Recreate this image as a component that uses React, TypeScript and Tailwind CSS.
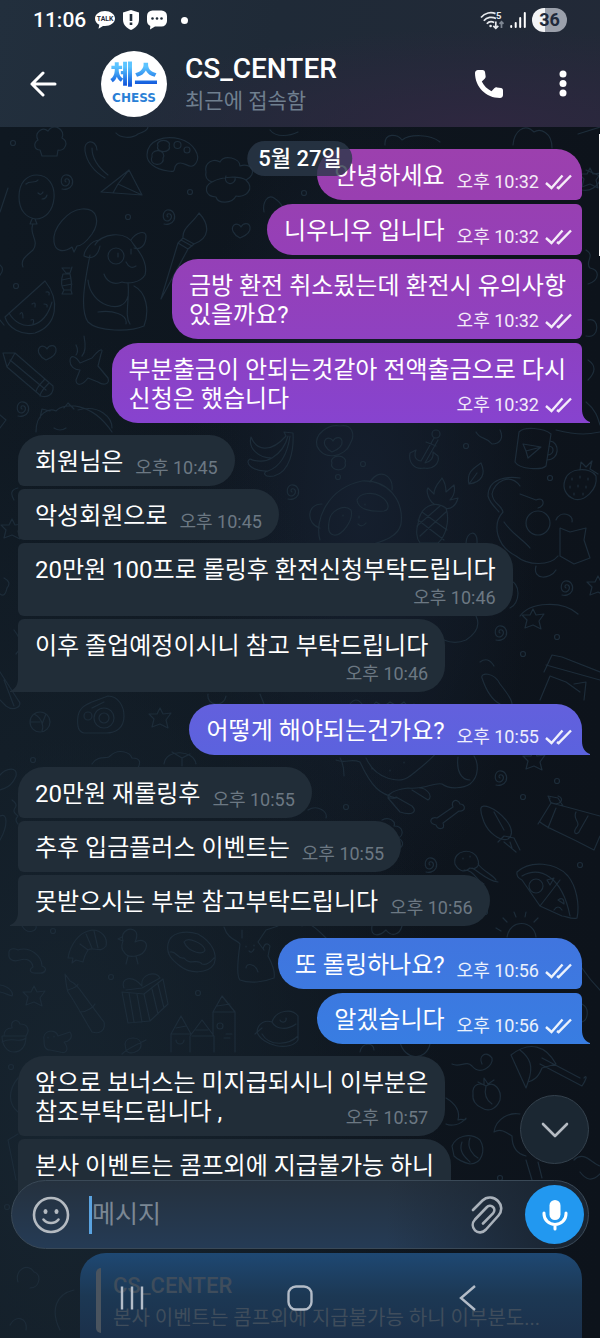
import type { ReactNode } from "react";

type Corner = "single" | "first" | "middle" | "last";

interface Message {
  lines: string[];
  time: string;
  stacked?: boolean;
  color?: string;
  tail?: string;
}

interface Group {
  own: boolean;
  messages: Message[];
}

const groups: Group[] = [
  {
    own: true,
    messages: [
      { lines: ["안녕하세요"], time: "오후 10:32", color: "from-[#9c40ae] to-[#993fb1]" },
      { lines: ["니우니우 입니다"], time: "오후 10:32", color: "from-[#9840b2] to-[#953fb8]" },
      {
        lines: ["금방 환전 취소됬는데 환전시 유의사항", "있을까요?"],
        time: "오후 10:32",
        color: "from-[#9540b7] to-[#8f41c1]",
      },
      {
        lines: ["부분출금이 안되는것같아 전액출금으로 다시", "신청은 했습니다"],
        time: "오후 10:32",
        color: "from-[#8d41c2] to-[#8743cf]",
        tail: "text-[#8743cf]",
      },
    ],
  },
  {
    own: false,
    messages: [
      { lines: ["회원님은"], time: "오후 10:45" },
      { lines: ["악성회원으로"], time: "오후 10:45" },
      { lines: ["20만원 100프로 롤링후 환전신청부탁드립니다"], time: "오후 10:46", stacked: true },
      { lines: ["이후 졸업예정이시니 참고 부탁드립니다"], time: "오후 10:46", stacked: true },
    ],
  },
  {
    own: true,
    messages: [
      {
        lines: ["어떻게 해야되는건가요?"],
        time: "오후 10:55",
        color: "from-[#6360dd] to-[#5b62de]",
        tail: "text-[#5b62de]",
      },
    ],
  },
  {
    own: false,
    messages: [
      { lines: ["20만원 재롤링후"], time: "오후 10:55" },
      { lines: ["추후 입금플러스 이벤트는"], time: "오후 10:55" },
      { lines: ["못받으시는 부분 참고부탁드립니다"], time: "오후 10:56" },
    ],
  },
  {
    own: true,
    messages: [
      { lines: ["또 롤링하나요?"], time: "오후 10:56", color: "from-[#4075df] to-[#3d79e0]" },
      {
        lines: ["알겠습니다"],
        time: "오후 10:56",
        color: "from-[#3c79e0] to-[#387de2]",
        tail: "text-[#387de2]",
      },
    ],
  },
];

const ownCorners: Record<Corner, string> = {
  single: "rounded-[26px] rounded-br-none",
  first: "rounded-[26px] rounded-br-md",
  middle: "rounded-l-[26px] rounded-r-md",
  last: "rounded-l-[26px] rounded-tr-md",
};

const peerCorners: Record<Corner, string> = {
  single: "rounded-[26px] rounded-bl-none",
  first: "rounded-[26px] rounded-bl-md",
  middle: "rounded-r-[26px] rounded-l-md",
  last: "rounded-r-[26px] rounded-tl-md",
};

function cornerOf(index: number, count: number): Corner {
  if (count === 1) return "single";
  if (index === 0) return "first";
  return index === count - 1 ? "last" : "middle";
}

const Ticks = () => (
  <svg viewBox="0 0 27 16" className="h-4 w-[27px]" fill="none" stroke="currentColor" strokeWidth="2.4">
    <path d="M1 9l5.500 5L17.500 1.500" />
    <path d="M12 13l1.600 1.200L26 1.500" />
  </svg>
);

const Bubble = ({ message, own, corner }: { message: Message; own: boolean; corner: Corner }) => {
  const { lines, time, stacked, color = "", tail = "" } = message;
  const hasTail = corner === "last" || corner === "single";
  const lead = lines.slice(0, -1);
  const last = lines[lines.length - 1];

  return (
    <li
      className={`relative w-fit pt-[13px] pb-2 pl-[17px] text-[24px] leading-[29px] text-white ${
        own
          ? `self-end bg-linear-to-b pr-[10px] ${color} ${ownCorners[corner]}`
          : `bg-[#212d38] pr-[17px] ${peerCorners[corner]}`
      }`}
    >
      {lead.map((line) => (
        <p key={line} className={own ? "pr-[6px]" : ""}>
          {line}
        </p>
      ))}
      <div className={stacked ? "flex flex-col gap-[3px]" : "flex items-end justify-between gap-3"}>
        <p className={stacked ? "" : "pb-px"}>{last}</p>
        <span
          className={`flex items-center gap-[6px] self-end whitespace-nowrap text-[18px] leading-5 ${
            own ? "text-white/90" : "text-[#6c7883]"
          }`}
        >
          {time}
          {own && <Ticks />}
        </span>
      </div>
      {hasTail && (
        <svg
          viewBox="0 0 8 14"
          fill="currentColor"
          className={`absolute bottom-0 h-[14px] w-2 ${own ? `-right-2 ${tail}` : "-left-2 -scale-x-100 text-[#212d38]"}`}
        >
          <path d="M0 0C0 7 3 11.500 8 13V14H0Z" />
        </svg>
      )}
    </li>
  );
};

/* Small motifs that repeat over the wallpaper */
const spirals = [
  [66, 181], [168, 216], [22, 408], [292, 491], [566, 587], [500, 632], [500, 777], [430, 864],
];
const hearts = [
  [241, 230], [47, 352], [333, 444],
];
const stars = [
  [12, 529], [160, 718], [533, 619], [598, 586], [534, 760], [34, 996], [590, 178],
];
const rings = [
  [13, 143], [190, 192], [128, 217], [16, 286], [304, 193], [363, 464], [338, 477], [466, 446],
  [550, 478], [557, 637], [523, 654], [557, 781], [523, 797], [580, 865], [346, 807], [111, 977],
  [198, 993], [53, 931], [11, 1067], [33, 760], [485, 912], [7, 1207], [500, 1178], [448, 1178],
];

const doodles = [
  // popcorn, hook, palette, clover tree
  "M38 140C34 133 42 126 48 131C54 122 66 130 62 138C70 142 64 152 58 150L57 156H42L40 150C34 150 33 143 38 140Z",
  "M97 150C96 138 83 140 85 151C87 163 95 172 105 178M92 148C92 160 99 168 108 175",
  "M147 155C147 140 165 135 180 139C194 143 201 156 196 163C190 172 184 159 177 164C172 168 178 173 168 171C155 169 147 163 147 155ZM158 146a6 4 0 1 0 11 0a6 4 0 1 0-11 0M152 157a6 5 0 1 0 11 1a6 5 0 1 0-11-1M174 145a3 3 0 1 0 7 0a3 3 0 1 0-7 0M184 150a3 3 0 1 0 6 0a3 3 0 1 0-6 0",
  "M206 172C204 162 214 158 220 162C224 154 240 158 240 166C252 162 258 174 246 180C256 190 244 198 236 196C232 204 218 204 216 197C204 196 204 186 212 182C206 180 205 176 206 172ZM212 182C222 176 240 176 246 180M226 176a5 5 0 1 0 9 1",
  // clouds along the top edge
  "M116 133C120 138 132 139 138 134C144 132 148 130 148 127M270 130C276 138 290 136 298 132",
  // balloon
  "M19 197C19 182 27 175 37 175C48 175 55 185 54 198C53 211 45 219 36 219C26 218 19 210 19 197ZM32 219L30 224H37L35 219M33 224C28 234 40 240 33 250C26 256 20 260 23 267M26 184C30 180 35 184 38 180M38 193q3 3 5-1M42 199q4 0 5-4",
  // paper plane
  "M101 192L129 170L142 195ZM129 170L118 184L142 195M118 184L113 193",
  // speech balloon
  "M54 242C52 228 68 210 82 209C98 208 100 222 92 234C84 245 80 246 77 246L74 252L72 247C62 254 55 250 54 242Z",
  // puppy
  "M95 245C100 234 126 229 134 245C140 252 148 264 145 275C140 283 128 284 122 282C112 286 106 280 104 274M100 240C90 240 84 252 84 256C92 260 98 256 100 246M131 240C136 232 146 230 146 236C146 246 140 250 134 248M108 256a8 8 0 1 0 16 0a8 8 0 1 0-16 0M118 253v4M131 249v5M126 262q4 8 10 4M90 255C84 285 80 310 88 322C98 332 130 332 144 326C150 310 146 292 134 286M128 283C130 300 124 316 130 324M88 280C90 306 124 316 128 296M98 312C112 310 128 314 126 324",
  // melon slice and sweet
  "M5 317L45 281C60 300 58 325 35 333C22 336 8 328 5 317ZM9 313C20 332 44 330 52 302M20 314q3-4 3 4M31 320q4-2 2 4M32 304q4-3 3 3M44 304q4 0 3 3M46 292q4-1 3 3",
  "M62 268L66 273H70L72 267M62 268H70M63 274C60 282 62 288 64 290H71C72 284 71 278 70 274ZM62 280L71 278M62 286L72 284M64 290L62 294H72L71 290",
  // brush
  "M161 299L178 243L188 249ZM181 240L192 246M183 238C182 228 192 224 199 213C210 225 210 238 194 244ZM178 243L183 238M188 249L194 244",
  "M264 212C262 202 268 194 274 198C280 202 286 208 282 216",
  // pencil and toy plane
  "M3 353L15 353L53 386C54 394 48 398 41 396L7 367ZM7 367L15 353M45 379C40 384 36 388 36 392M49 383C44 388 40 392 40 396M10 360L46 390",
  "M70 361C70 354 76 356 80 363L92 358C100 348 104 348 101 354L98 366L108 378C110 384 104 386 98 382L88 378C82 386 76 386 76 380L80 370C74 370 70 366 70 361ZM84 336C86 346 86 352 82 356M76 345q3 6 0 10",
  // sleepy bear above the first reply
  "M36 432C36 412 50 408 56 411C64 402 92 402 112 432M40 418L42 409L50 411M64 408L68 403L74 409M78 410C100 404 112 418 112 428M54 428q6 4 12 0",
  "M0 212L8 188M0 275q5-6 0-10M0 320L4 325M0 415L6 420L0 428",
  // right side of the first group
  "M385 145C384 132 398 134 402 140C410 134 430 134 440 142M513 145C514 132 524 122 534 132C540 128 552 132 552 148M578 134L600 127M586 170L600 176M582 190C590 192 598 186 600 180M586 250C596 256 584 262 590 268C600 270 600 280 588 284M588 320C600 316 600 340 586 336M588 360q12 8 0 20M586 402C596 410 598 418 600 425",
  // bananas
  "M251 437C256 450 270 454 286 436L284 432L293 433C294 450 290 472 274 476C264 478 262 472 268 471C252 472 244 462 250 459C256 462 266 462 272 458C258 458 248 448 251 437ZM272 458C282 452 286 444 288 436M268 471C282 466 288 450 290 436",
  // thought bubble
  "M317 446C314 434 328 424 340 426C352 424 356 434 350 444C346 456 324 462 317 446ZM332 463a7 5 0 1 0 13 0a7 5 0 1 0-13 0",
  // anchor
  "M432 434a4 4 0 1 0 8 0a4 4 0 1 0-8 0M434 438L421 461C414 460 414 454 416 450L410 453C408 462 414 470 424 468C432 470 440 464 438 456L433 452C434 458 430 462 425 463L438 440M426 442L436 446",
  "M476 432C480 440 486 436 492 444C500 444 504 438 500 430M556 430C580 436 590 434 600 432",
  // mug
  "M519 432L515 462C520 470 542 470 546 466L551 434C544 428 524 426 519 432ZM550 441C560 442 560 460 547 460M549 446C555 447 554 454 548 455M523 444L541 447L528 458L526 451L541 447M526 451L523 444",
  // leaf and strawberry
  "M469 484C466 472 474 468 481 463C486 474 482 482 469 484ZM469 484L477 473",
  "M565 480C568 468 590 466 596 476C598 490 584 502 574 499C566 496 562 488 565 480ZM580 470L581 462L586 467L592 461L590 469L598 474M572 478v2M580 476v2M588 478v2M570 486v2M578 485v2M586 486v2M574 493v2M583 493v2",
  // panda
  "M320 540C314 520 328 488 362 481C388 480 404 500 401 524C398 538 380 542 370 545M320 528C306 524 306 504 322 504M370 482C378 468 394 474 392 490M329 522C330 510 344 504 351 510C354 520 342 536 334 535C328 534 328 528 329 522ZM357 500C360 492 374 492 380 496C390 502 390 510 384 511C372 512 358 510 357 500ZM358 524q4 4 8-1M359 516v2M343 515v1M365 504v1",
  // pineapple
  "M418 524C420 506 434 500 446 508C450 520 446 536 438 543H420C416 538 416 530 418 524ZM434 504C428 500 426 490 428 488L434 494C434 486 440 482 442 478C446 484 446 488 446 492L454 485C456 494 452 498 450 500L458 498C456 506 450 510 445 508M418 520L444 540M422 512L447 530M446 512L420 536M440 506L417 526",
  // acrobat cat
  "M520 486C510 472 494 482 492 494C494 506 500 502 503 512C492 524 496 546 516 556C528 566 550 566 558 556M520 478C508 476 488 478 488 496C490 504 498 510 499 512M520 494L536 500C544 496 546 506 538 508M526 523a12 12 0 1 0 24 0a12 12 0 1 0-24 0M504 522C512 534 524 540 530 548M560 528L570 532L586 528L584 540L590 558L574 564L560 556ZM556 520C560 510 574 514 572 522M536 566C532 580 550 580 556 570",
  "M466 543C466 532 478 528 477 543M510 608C520 604 522 582 508 580",
  "M520 616C530 602 562 600 578 614M428 622C434 640 452 646 466 640C478 632 480 624 476 616",
  // lower right fragments
  "M480 662q8-6 14 4M482 678C480 672 494 672 500 684C508 694 512 700 512 704M482 678C486 690 492 700 500 704M544 672L552 655L562 657L600 672M546 665L600 680M540 700L550 676L566 682L580 692M574 684L586 682L584 700",
  "M350 704q6-8 12 0q6 8 14-2q8 6 14 0q8 6 14 0q6 8 10 2M260 694L264 704M208 694C206 706 224 708 226 696",
  "M14 500q-6-10 4-12M4 578q8 4 3 10q-2 10-7 6M14 630C22 640 22 648 16 654",
  // crayon, ball, camera
  "M0 672L18 700C24 706 14 712 6 706L0 700M4 680L14 706",
  "M30 722a10 10 0 1 0 20 0a10 10 0 1 0-20 0M34 714C42 718 44 726 42 731M30 722L40 722M46 714L42 724",
  "M78 716C80 706 88 704 92 702L108 696C118 696 124 706 124 716C124 728 116 733 106 733H84C78 732 77 724 78 716ZM94 718a10 10 0 1 0 20 0a10 10 0 1 0-20 0M99 718a5 5 0 1 0 10 0a5 5 0 1 0-10 0M84 716a4 4 0 1 0 8 0a4 4 0 1 0-8 0M92 708L104 702",
  "M0 775C6 768 18 766 16 776C12 786 6 788 0 790M0 816C8 812 8 826 0 840M12 800q6 4 3 8t3 8q-4 4 0 8",
  "M92 764C98 754 108 760 110 756C118 748 130 752 132 758C142 758 140 764 138 768M164 764C166 748 194 750 196 764M172 752L182 758L190 754M182 758V766",
  // stingray
  "M336 760C346 764 350 758 360 762C372 788 380 794 396 798C380 800 390 790 408 788C424 790 434 782 442 784C450 790 464 788 470 784C480 776 478 762 474 756M366 758C376 780 400 784 410 776C420 768 434 758 440 748M388 798L400 812C412 816 418 812 412 806L396 797M412 790L428 800C434 796 426 788 420 788M458 757C456 772 462 780 470 780M372 768v1M390 770v1M404 762v1",
  // bone
  "M437 818L453 807C450 800 458 798 460 804C466 804 466 812 459 811L443 823C446 830 438 830 436 825C428 824 430 816 437 818Z",
  // squid
  "M481 808C482 804 494 806 506 820C514 830 512 836 508 839C500 842 488 832 484 822C482 816 480 812 481 808ZM498 842L504 836L514 838L520 850M504 842L516 852M510 842L512 848M494 812L504 830",
  // milk carton
  "M538 824L551 803L563 806L600 816M551 803L548 796L558 798L563 806M540 822C546 828 556 830 594 850L600 836M556 808L548 828M576 812C572 820 582 822 576 828C572 834 578 836 580 830L588 816M550 798a6 4 0 1 0 8-2",
  // jellyfish
  "M455 864C452 850 474 846 478 860C480 866 476 870 470 868C464 874 458 870 455 864ZM464 870C474 870 476 880 484 884M472 868C480 872 486 880 498 882M478 864C484 872 492 874 496 880M463 858v1M470 856v1",
  // pizza
  "M517 872C530 860 556 862 568 876C576 886 580 904 577 918C572 920 566 916 562 916L540 906L522 880C518 878 516 876 517 872ZM522 876C540 866 562 876 570 916M529 886a7 7 0 1 0 14 0a7 7 0 1 0-14 0M540 906L560 880M547 880L554 878L550 885ZM558 900q6-4 6 4ZM554 910q4-6 8 0",
  // bread, hand and sun
  "M382 820C390 816 396 822 394 826C404 826 404 836 398 838C406 842 402 850 396 848M308 810C318 804 328 812 326 818M344 776a10 22 0 0 0-4-18",
  "M507 937C510 918 534 920 536 937M496 928L501 931M503 918L507 922M514 912L516 917M526 912L525 917M538 918L534 922M302 926C306 918 318 930 326 938M372 926C370 938 380 936 386 930C392 938 400 934 402 926M384 976C390 972 396 974 398 978M582 968C590 980 596 986 600 990M582 1004C590 1008 588 1020 582 1022",
  // shrimp tail, chick, donut
  "M68 958C70 946 78 932 92 930C102 930 108 938 106 946C100 954 94 946 88 950C84 956 84 958 83 962L76 960L72 963L73 958ZM80 944L88 950M86 934L92 948M94 931L98 948",
  "M123 941C120 930 132 926 136 932C138 936 136 940 135 942C142 938 148 942 146 948C144 956 128 960 124 952C120 948 122 944 123 941ZM128 956L126 964M136 956L138 964M122 937L118 939L123 941",
  "M168 944C170 932 186 930 198 934C212 942 218 954 214 964C208 974 190 974 180 966C172 960 166 954 168 944ZM184 942C188 936 204 944 205 950C204 956 188 952 184 942ZM170 952C176 950 178 960 184 958C190 966 198 958 202 964C208 966 212 960 214 958",
  "M22 926C28 936 38 930 36 926",
  // rainbow
  "M9 954C8 948 14 948 18 950C30 946 42 956 42 966C48 968 46 974 38 973C30 974 28 970 33 967C32 960 26 958 20 960C14 962 8 960 9 954Z",
  // waving rabbit
  "M224 927C228 940 238 940 240 944C238 958 236 976 240 980C250 984 264 982 274 978C276 970 270 960 268 956L270 946C266 940 262 948 264 950L258 942L266 930L278 926M242 930V938M246 968C246 962 256 964 258 972M246 946v1M254 945v1M249 951q3 3 5-2",
  // marker and present
  "M65 974L70 981C78 984 82 994 104 1022C106 1032 98 1034 92 1032C88 1026 74 1000 68 992C66 986 66 982 65 974ZM68 990C74 988 78 986 78 984M80 1012C88 1012 94 1006 95 1004",
  "M122 992L144 994L163 979L168 1004L150 1021L128 1023ZM144 994L150 1021M129 993L134 1022M137 994L142 1022M152 989L158 1014M158 984L164 1008M124 988C120 978 132 974 142 986C140 974 156 970 160 978L142 988L126 990",
  "M0 985C8 986 14 992 12 996C6 994 2 992 0 992",
  // castle
  "M171 1052V1034L181 1016L191 1034M176 1040a4 4 0 1 0 8 0M190 1052V1036L202 1020L214 1036V1052M192 1036H214M171 1034H191M213 1036V1012L222 996L235 1012V1052M213 1012H235M217 1026a3 3 0 1 0 6 0a3 3 0 1 0-6 0M217 1006L230 1004M176 1028L186 1026M196 1030L208 1030M226 1034H232M224 1038H230",
  // saucer, planet, cupcake
  "M257 1032C258 1022 266 1020 272 1022C276 1010 292 1008 298 1016V1040C290 1052 262 1046 257 1032ZM262 1034C270 1048 290 1044 298 1036M280 1020a3 3 0 1 0 6-2M272 1022C276 1030 288 1030 296 1024M255 1034L262 1028",
  "M125 1044C126 1036 140 1036 141 1044C142 1052 128 1056 126 1050ZM122 1054C128 1048 142 1042 146 1040",
  "M2 1036H26C26 1048 20 1052 14 1052C6 1052 2 1044 2 1036ZM4 1036C4 1028 10 1028 12 1028C10 1020 18 1018 20 1024C28 1024 30 1030 26 1036M2 1042C12 1036 20 1044 26 1038",
  "M44 1040C42 1030 56 1028 58 1036L70 1032C74 1038 68 1042 64 1042C70 1050 66 1054 60 1052L50 1050C44 1050 44 1044 44 1040M48 1037v1M54 1036v1",
  // lower part, beside the last replies
  "M360 1052C362 1042 374 1042 374 1050M400 1042C404 1060 426 1062 430 1044M452 1064C460 1068 466 1060 472 1066C480 1076 494 1066 492 1058C486 1050 478 1056 482 1064",
  "M511 1055L526 1088L528 1082C534 1080 538 1078 542 1068L556 1064C546 1046 530 1040 511 1055ZM540 1064L582 1086C586 1080 588 1074 584 1078M542 1058L580 1078M520 1050C530 1058 534 1066 528 1082",
  "M473 1094C472 1084 480 1082 486 1086C494 1080 502 1090 500 1100C496 1110 488 1112 482 1108C476 1106 472 1100 473 1094ZM486 1086C484 1094 486 1100 492 1104M478 1082L484 1085L484 1078L488 1084L494 1080",
  "M446 1098C456 1104 460 1112 458 1120C462 1118 466 1122 466 1118C460 1126 450 1126 446 1124",
  "M452 1146C456 1136 470 1132 480 1140C486 1150 482 1164 470 1164C462 1162 456 1158 454 1156ZM462 1142C458 1152 466 1158 470 1162M470 1138C466 1148 474 1156 478 1158",
  "M494 1132C496 1118 510 1112 520 1114M494 1132C500 1128 506 1132 512 1136M512 1136C512 1148 518 1154 526 1156M526 1160L532 1180M538 1162L542 1178M574 1160C584 1150 592 1164 600 1166M580 1172C586 1180 592 1182 600 1174",
  "M18 1078C8 1090 8 1104 18 1112M8 1140L16 1180M8 1140L18 1134",
  "M18 1282C14 1270 28 1262 34 1272C42 1274 40 1288 30 1288M60 1330C50 1310 56 1294 74 1290M10 1325C16 1314 28 1318 26 1330",
];

const Wallpaper = () => (
  <svg
    viewBox="0 0 600 1338"
    preserveAspectRatio="xMidYMin slice"
    aria-hidden="true"
    className="absolute inset-0 size-full text-[#1d2c39]"
    fill="none"
    stroke="currentColor"
    strokeWidth="1.2"
    strokeLinejoin="round"
    strokeLinecap="round"
  >
    {doodles.map((d) => (
      <path key={d} d={d} />
    ))}
    {spirals.map(([x, y]) => (
      <path
        key={`${x}-${y}`}
        transform={`translate(${x} ${y})`}
        d="M0 1C-2 0-1-3 2-2C5 0 3 5-1 5C-6 4-6-4-1-6C5-7 8-1 6 4C4 8-1 9-4 8"
      />
    ))}
    {hearts.map(([x, y]) => (
      <path
        key={`${x}-${y}`}
        transform={`translate(${x} ${y})`}
        d="M-1 8C-7 5-11-1-7-5C-4-7-1-5 0-3C2-7 8-8 9-3C10 2 4 6-1 8Z"
      />
    ))}
    {stars.map(([x, y]) => (
      <path
        key={`${x}-${y}`}
        transform={`translate(${x} ${y})`}
        d="M0-10L3-4L11-5L6 2L8 10L0 6L-8 9L-6 1L-11-4L-3-4Z"
      />
    ))}
    {rings.map(([x, y]) => (
      <circle key={`${x}-${y}`} cx={x} cy={y} r="2.5" />
    ))}
  </svg>
);

const StatusBar = () => (
  <div className="flex h-10 items-center justify-between px-[33px] text-white">
    <div className="flex items-center gap-2">
      <span className="text-[21px] leading-6 font-medium">11:06</span>
      <svg viewBox="0 0 20 20" className="ml-px size-5">
        <path
          fill="#fff"
          d="M10 1C4.500 1 0 4.200 0 8.500c0 2.700 1.700 5 4.300 6.300L3.500 18.800 8 15.900c.7.100 1.300.1 2 .1 5.500 0 10-3.300 10-7.500S15.500 1 10 1z"
        />
        <text x="10" y="11" textAnchor="middle" fontSize="6.800" fontWeight="700" fill="#1f2b38">
          TALK
        </text>
      </svg>
      <svg viewBox="0 0 16 20" className="h-5 w-4">
        <path fill="#fff" d="M8 0l8 2.500v7.200c0 4.900-3.600 8.300-8 10.300-4.400-2-8-5.400-8-10.300V2.500z" />
        <path fill="#1f2b38" d="M6.700 4h2.600v7H6.700zM6.700 12.500h2.600v2.500H6.700z" />
      </svg>
      <svg viewBox="0 0 20 20" className="size-5">
        <path fill="#fff" d="M5.500.5h9a5.500 5.500 0 015.500 5.500v5a5.500 5.500 0 01-5.500 5.500H8L3 19.500l.3-3.600A5.500 5.500 0 010 11V6A5.500 5.500 0 015.500.5z" />
        <g fill="#1f2b38">
          <circle cx="5.500" cy="8.500" r="1.300" />
          <circle cx="10" cy="8.500" r="1.300" />
          <circle cx="14.500" cy="8.500" r="1.300" />
        </g>
      </svg>
      <span className="ml-[6px] size-[7px] rounded-full bg-white" />
    </div>
    <div className="flex items-center gap-[6px]">
      <svg viewBox="0 0 24 20" className="h-5 w-6" fill="none" stroke="#e6e9ed" strokeWidth="1.700">
        <path d="M1 7.500C5 2.600 11 1.600 15.500 3.600" />
        <path d="M3.800 10.800C7 7 12 6.300 16 8.600" />
        <path d="M6.800 13.700c2-2.200 5-2.500 7.400-1.200" />
        <circle cx="10.600" cy="16" r="1.300" fill="#e6e9ed" stroke="none" />
        <path d="M15.800 11.500v6.500M13.300 15.800l2.500 2.500 2.500-2.500" />
        <path stroke="#7e8793" d="M21.500 18v-6M19.500 13.800l2-2 2 2" />
        <text x="16" y="8.500" fontSize="9.500" fontWeight="700" fill="#e6e9ed" stroke="none">
          5
        </text>
      </svg>
      <svg viewBox="0 0 16 18" className="h-[18px] w-4" stroke="#fff" strokeWidth="2" strokeLinecap="round">
        <path d="M1.200 16v-1M5.700 16v-4M10.200 16V7M14.800 16V2" />
      </svg>
      <span className="flex h-6 w-[35px] items-center justify-center rounded-full bg-linear-to-r from-[#f3f4f6] from-36% to-[#9ba0ab] to-36% text-[18px] leading-6 font-bold text-[#20293a]">
        36
      </span>
    </div>
  </div>
);

const Header = () => (
  <header className="relative bg-[radial-gradient(ellipse_at_80%_100%,#2e2740_0%,transparent_55%),linear-gradient(100deg,#222f3d,#1f2a37_45%,#222937)]">
    <StatusBar />
    <div className="flex h-[87px] items-center pr-[19px] pl-[29px]">
      <button type="button" aria-label="뒤로" className="text-white">
        <svg viewBox="0 0 28 26" className="h-[26px] w-7" fill="none" stroke="currentColor" strokeWidth="3" strokeLinecap="round" strokeLinejoin="round">
          <path d="M26 13H3M14 2L3 13l11 11" />
        </svg>
      </button>
      <div className="ml-11 flex size-[66px] shrink-0 flex-col items-center justify-center rounded-full bg-white">
        <span className="bg-linear-to-b from-[#5cc4ff] from-20% to-[#1458dc] to-80% bg-clip-text text-[26px] leading-[29px] font-black text-transparent">
          체스
        </span>
        <span className="font-['DejaVu_Sans'] text-[12px] leading-4 font-bold text-[#2a7fd6]">CHESS</span>
      </div>
      <div className="ml-[18px] min-w-0 flex-1">
        <h1 className="text-[28px] leading-[34px] font-medium text-white">CS_CENTER</h1>
        <p className="text-[21px] leading-[30px] text-[#6f7f8f]">최근에 접속함</p>
      </div>
      <button type="button" aria-label="전화" className="text-white">
        <svg viewBox="0 0 28 28" className="size-7" fill="currentColor">
          <path d="M3 0h4.500c1.300 0 2.300.8 2.500 2l.6 4c.2 1-.1 2-.9 2.700L6.800 11.500c2.200 4.400 5.300 7.500 9.700 9.700l2.800-2.900c.7-.8 1.700-1.100 2.700-.9l4 .6c1.200.2 2 1.200 2 2.500V25c0 1.700-1.400 3-3 3C11 28 0 17 0 3 0 1.400 1.300 0 3 0z" />
        </svg>
      </button>
      <button type="button" aria-label="메뉴" className="ml-[42px] flex w-9 justify-center text-white">
        <svg viewBox="0 0 8 27" className="h-[27px] w-2" fill="currentColor">
          <circle cx="4" cy="4" r="3.500" />
          <circle cx="4" cy="13.500" r="3.500" />
          <circle cx="4" cy="23" r="3.500" />
        </svg>
      </button>
    </div>
  </header>
);

const Composer = () => (
  <form
    onSubmit={(e) => e.preventDefault()}
    className="relative mx-[11px] -mt-6 flex h-[69px] items-center rounded-full border border-[#3a4957] bg-[linear-gradient(to_right,transparent_65%,#1a2532_95%),linear-gradient(#25313e,#253b55)] pr-1 pl-5"
  >
    <button type="button" aria-label="이모지" className="text-[#b4bac1]">
      <svg viewBox="0 0 38 38" className="size-[38px]" fill="none" stroke="currentColor" strokeWidth="2.600" strokeLinecap="round">
        <circle cx="19" cy="19" r="17" />
        <path d="M11.500 23.500c3.500 4.600 11.500 4.600 15 0" />
        <ellipse cx="13.500" cy="15.500" rx="2" ry="2.600" fill="currentColor" stroke="none" />
        <ellipse cx="24.500" cy="15.500" rx="2" ry="2.600" fill="currentColor" stroke="none" />
      </svg>
    </button>
    <input
      type="text"
      aria-label="메시지"
      placeholder="메시지"
      className="ml-[19px] h-[38px] min-w-0 flex-1 border-l-[3px] border-[#5aa3e0] text-[25px] text-white outline-none placeholder:text-[#7b8794]"
    />
    <button type="button" aria-label="파일 첨부" className="mr-[22px] text-[#a9b1ba]">
      <svg viewBox="0 0 32 38" className="h-[38px] w-8" fill="none" stroke="currentColor" strokeWidth="2.600" strokeLinecap="round" strokeLinejoin="round">
        <path d="M2 14L11.500 4.500C16 0 23 .8 27 5s4.400 10 .5 14.500L15 33.500c-3.300 3.500-8 3.800-11 .8s-3-7.400 0-10.800L15.500 11.500c2-2 4.700-2.200 6.500-.5s1.800 4.300 0 6.300L12 27.500" />
      </svg>
    </button>
    <button
      type="button"
      aria-label="음성 메시지"
      className="flex size-[59px] shrink-0 items-center justify-center rounded-full bg-[#2298f0] text-white"
    >
      <svg viewBox="0 0 26 32" className="h-8 w-[26px]">
        <rect x="7.500" y="1" width="11" height="20" rx="5.500" fill="currentColor" />
        <path d="M2 14v1a11 10.500 0 0022 0v-1M13 25.500V30" fill="none" stroke="currentColor" strokeWidth="3" strokeLinecap="round" />
      </svg>
    </button>
  </form>
);

const NavButton = ({ label, children }: { label: string; children: ReactNode }) => (
  <button type="button" aria-label={label} className="flex justify-center text-[#b3bcc8]">
    <svg viewBox="0 0 28 28" className="size-7" fill="none" stroke="currentColor" strokeWidth="2.400">
      {children}
    </svg>
  </button>
);

const SystemNav = () => (
  <nav className="absolute inset-x-0 bottom-0 grid grid-cols-3 px-12 pb-[26px]">
    <NavButton label="최근 앱">
      <path d="M4 2.500v23M14 2.500v23M24 2.500v23" />
    </NavButton>
    <NavButton label="홈">
      <rect x="2.500" y="2.500" width="23" height="23" rx="7.500" />
    </NavButton>
    <NavButton label="이전">
      <path d="M21 2L7 14l14 12" />
    </NavButton>
  </nav>
);

export default function App() {
  return (
    <div className="relative min-h-screen overflow-hidden bg-[radial-gradient(ellipse_at_10%_85%,#17242f_0%,transparent_50%),radial-gradient(ellipse_at_60%_38%,#151f2e_0%,transparent_35%),linear-gradient(to_right,#0f1821,#0d131b)] font-[Roboto,'Noto_Sans_CJK_KR',sans-serif]">
      <Wallpaper />
      <Header />

      <main className="relative pt-[22px]">
        <div className="flex flex-col gap-3 px-[18px]">
          {groups.map((group, g) => (
            <ul key={g} className={`flex flex-col ${group.own ? "gap-1" : "gap-[3px]"}`}>
              {group.messages.map((message, i) => (
                <Bubble
                  key={message.lines[0]}
                  message={message}
                  own={group.own}
                  corner={cornerOf(i, group.messages.length)}
                />
              ))}
            </ul>
          ))}
          <ul className="flex flex-col gap-[3px]">
            <Bubble
              message={{
                lines: ["앞으로 보너스는 미지급되시니 이부분은", "참조부탁드립니다 ,"],
                time: "오후 10:57",
              }}
              own={false}
              corner="first"
            />
            <li className="w-fit rounded-tl-md rounded-tr-[26px] bg-[#212d38] px-[17px] pt-[13px] pb-[23px] text-[24px] leading-[29px] text-white">
              본사 이벤트는 콤프외에 지급불가능 하니
            </li>
          </ul>
        </div>

        <time className="absolute top-[14px] left-1/2 -translate-x-1/2 rounded-full bg-[#2a3848]/80 px-[11px] text-[22px] leading-[35px] font-medium whitespace-nowrap text-white">
          5월 27일
        </time>
        <span className="absolute top-[7px] right-0 h-[122px] w-px bg-white" />

        <Composer />

        <button
          type="button"
          aria-label="맨 아래로"
          className="absolute right-[11px] bottom-[85px] flex size-[69px] items-center justify-center rounded-full border border-[#34414d] bg-[#1b2732] text-[#b5bbc2]"
        >
          <svg viewBox="0 0 28 16" className="h-4 w-7" fill="none" stroke="currentColor" strokeWidth="2.600" strokeLinecap="round" strokeLinejoin="round">
            <path d="M2 2l12 12L26 2" />
          </svg>
        </button>
      </main>

      <div className="relative mt-1 mr-[18px] ml-20 flex gap-3 rounded-t-[26px] bg-linear-to-b from-[#1e4873] via-[#1c3854] to-[#1b304a] px-4 pt-[15px] pb-[5px] text-[#3f4d5c]">
        <span className="w-[5px] shrink-0 rounded-l-full bg-[#4a545f]" />
        <div className="min-w-0">
          <p className="text-[22px] leading-9 font-medium">CS_CENTER</p>
          <p className="truncate text-[20px] leading-[29px]">본사 이벤트는 콤프외에 지급불가능 하니 이부분도...</p>
        </div>
      </div>
      <SystemNav />
    </div>
  );
}
